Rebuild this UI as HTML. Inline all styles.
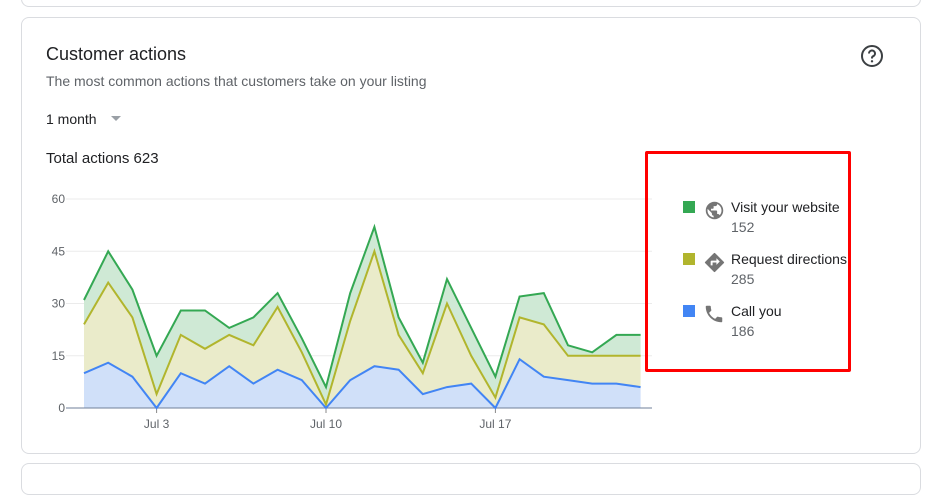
<!DOCTYPE html>
<html><head><meta charset="utf-8"><style>
body{margin:0;width:947px;height:474px;background:#fff;font-family:"Liberation Sans",Arial,sans-serif;overflow:hidden;position:relative}
.card{position:absolute;border:1px solid #dadce0;border-radius:8px;background:#fff}
.t{position:absolute;white-space:nowrap}
</style></head><body>
<div class="card" style="left:21px;top:-10px;width:898px;height:15px"></div>
<div class="card" style="left:21px;top:17px;width:898px;height:435px"></div>
<div class="card" style="left:21px;top:463px;width:898px;height:30px"></div>
<div class="t" style="left:46px;top:44px;font-size:18px;color:#202124">Customer actions</div>
<div class="t" style="left:46px;top:73px;font-size:14px;color:#5f6368">The most common actions that customers take on your listing</div>
<div class="t" style="left:46px;top:111px;font-size:14px;color:#202124">1 month</div>
<div style="position:absolute;left:111px;top:116px;width:0;height:0;border-left:5px solid transparent;border-right:5px solid transparent;border-top:5px solid #9aa0a6"></div>
<div class="t" style="left:46px;top:150px;font-size:15px;color:#202124">Total actions 623</div>
<svg style="position:absolute;left:860px;top:44px" width="24" height="24" viewBox="0 0 24 24"><circle cx="12" cy="12" r="10" fill="none" stroke="#3c4043" stroke-width="2"/><path d="M9 9.5a3 3 0 1 1 4.2 2.7c-.8.4-1.2 1-1.2 1.8v.5" fill="none" stroke="#3c4043" stroke-width="2"/><circle cx="12" cy="17.3" r="1.2" fill="#3c4043"/></svg>
<svg id="ch" style="position:absolute;left:0;top:0" width="947" height="474"></svg>
<div style="position:absolute;left:645px;top:151px;width:200px;height:215px;border:3px solid #f00;border-radius:2px"></div>
<div style="position:absolute;left:683px;top:201px;width:12px;height:12px;background:#34a853"></div>
<div style="position:absolute;left:683px;top:253px;width:12px;height:12px;background:#b1b52d"></div>
<div style="position:absolute;left:683px;top:305px;width:12px;height:12px;background:#4285f4"></div>
<svg style="position:absolute;left:704px;top:200px" width="21" height="21" viewBox="0 0 24 24"><path fill="#757575" d="M12 2C6.48 2 2 6.48 2 12s4.48 10 10 10 10-4.48 10-10S17.52 2 12 2zm-1 17.930c-3.95-.49-7-3.85-7-7.93 0-.62.08-1.21.21-1.79L9 15v1c0 1.1.9 2 2 2v1.93zm6.9-2.54c-.26-.81-1-1.390-1.9-1.39h-1v-3c0-.55-.45-1-1-1H8v-2h2c.55 0 1-.45 1-1V7h2c1.1 0 2-.9 2-2v-.41c2.93 1.19 5 4.06 5 7.41 0 2.08-.8 3.97-2.1 5.39z"/></svg>
<svg style="position:absolute;left:703px;top:251px" width="23" height="23" viewBox="0 0 24 24"><path fill="#757575" d="M21.71 11.29l-9-9a.996.996 0 0 0-1.41 0l-9 9a.996.996 0 0 0 0 1.41l9 9c.39.39 1.02.39 1.41 0l9-9a.996.996 0 0 0 0-1.41zM14 14.5V12h-4v3H8v-4c0-.55.45-1 1-1h5V7.5l3.5 3.5-3.5 3.5z"/></svg>
<svg style="position:absolute;left:703px;top:303px" width="22" height="22" viewBox="0 0 24 24"><path fill="#757575" d="M6.62 10.79c1.44 2.83 3.76 5.14 6.59 6.59l2.2-2.2c.27-.27.67-.36 1.02-.24 1.12.37 2.33.57 3.57.57.55 0 1 .45 1 1V20c0 .55-.45 1-1 1-9.39 0-17-7.610-17-17 0-.55.45-1 1-1h3.5c.55 0 1 .45 1 1 0 1.25.2 2.45.57 3.57.11.35.03.74-.25 1.02l-2.2 2.2z"/></svg>
<div class="t" style="left:731px;top:199px;font-size:14px;color:#202124">Visit your website</div>
<div class="t" style="left:731px;top:219px;font-size:14px;color:#5f6368">152</div>
<div class="t" style="left:731px;top:251px;font-size:14px;color:#202124">Request directions</div>
<div class="t" style="left:731px;top:271px;font-size:14px;color:#5f6368">285</div>
<div class="t" style="left:731px;top:303px;font-size:14px;color:#202124">Call you</div>
<div class="t" style="left:731px;top:323px;font-size:14px;color:#5f6368">186</div>
<script>
var G=[31,45,34,15,28,28,23,26,33,20,6,33,52,26,13,37,23,9,32,33,18,16,21,21];
var Y=[24,36,26,4,21,17,21,18,29,16,1,25,45,21,10,30,15,3,26,24,15,15,15,15];
var B=[10,13,9,0,10,7,12,7,11,8,0,8,12,11,4,6,7,0,14,9,8,7,7,6];
function X(i){return 84+i*24.2}function V(v){return 408-v*3.483}
function pts(a){return a.map(function(v,i){return X(i).toFixed(1)+","+V(v).toFixed(1)}).join(" ")}
function area(top,bot){var s=top.map(function(v,i){return X(i).toFixed(1)+","+V(v).toFixed(1)});for(var i=bot.length-1;i>=0;i--)s.push(X(i).toFixed(1)+","+V(bot[i]).toFixed(1));return s.join(" ")}
var Z=G.map(function(){return 0});
var h="";
[0,15,30,45,60].forEach(function(v){h+='<line x1="66" x2="652" y1="'+V(v)+'" y2="'+V(v)+'" stroke="#ebebeb"/>';h+='<text x="65" y="'+(V(v)+4)+'" text-anchor="end" font-size="12" fill="#5f6368" font-family="Liberation Sans">'+v+'</text>'});
h+='<polygon points="'+area(G,Y)+'" fill="#cfe9d5"/>';
h+='<polygon points="'+area(Y,B)+'" fill="#eaebca"/>';
h+='<polygon points="'+area(B,Z)+'" fill="#d0e0f9"/>';
h+='<line x1="66" x2="652" y1="408" y2="408" stroke="#6f7f99"/>';
[[3,"Jul 3"],[10,"Jul 10"],[17,"Jul 17"]].forEach(function(t){h+='<line x1="'+X(t[0])+'" x2="'+X(t[0])+'" y1="408" y2="413" stroke="#888"/><text x="'+X(t[0])+'" y="428" text-anchor="middle" font-size="12" fill="#5f6368" font-family="Liberation Sans">'+t[1]+'</text>'});
h+='<polyline points="'+pts(G)+'" fill="none" stroke="#34a853" stroke-width="2"/>';
h+='<polyline points="'+pts(Y)+'" fill="none" stroke="#b1b52d" stroke-width="2"/>';
h+='<polyline points="'+pts(B)+'" fill="none" stroke="#4285f4" stroke-width="2"/>';
document.getElementById("ch").innerHTML=h;
</script>
</body></html>
